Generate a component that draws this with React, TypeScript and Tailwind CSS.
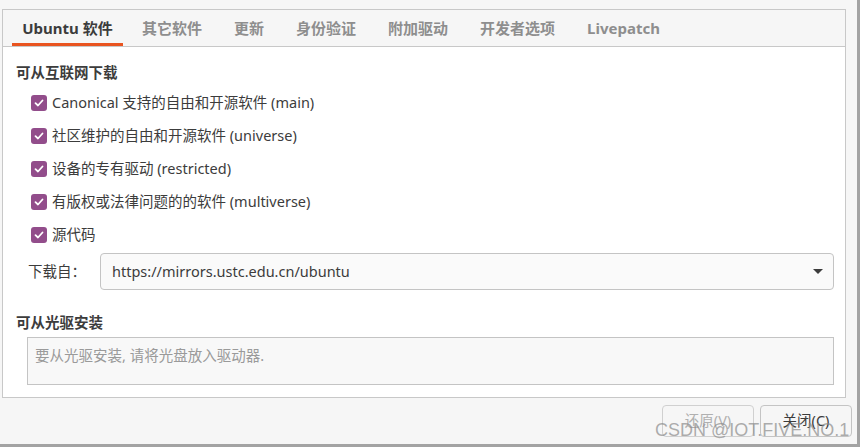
const tabs = ['Ubuntu 软件', '其它软件', '更新', '身份验证', '附加驱动', '开发者选项', 'Livepatch']

const sources = [
    'Canonical 支持的自由和开源软件 (main)',
    '社区维护的自由和开源软件 (universe)',
    '设备的专有驱动 (restricted)',
    '有版权或法律问题的的软件 (multiverse)',
    '源代码',
]

const CheckBox = () => (
    <span className="w-4 h-4 rounded-[3px] bg-[#924d8b] flex items-center justify-center shrink-0">
        <svg width="12" height="12" viewBox="0 0 12 12" fill="none">
            <path d="M2.5 6.2 L5 8.5 L9.5 3.5" stroke="#fff" strokeWidth="1.8" strokeLinecap="round" strokeLinejoin="round" />
        </svg>
    </span>
)

export default function App() {
    return (
        <div
            className="relative w-[860px] h-[447px] bg-[#f6f6f6] border-r-[3px] border-b-[3px] border-[#a3a3a3] text-[14.5px] text-[#3c3c3c] overflow-hidden"
            style={{ fontFamily: '"Noto Sans", "Noto Sans CJK SC", sans-serif' }}
        >
            <div className="ml-[2px] mt-[9px] w-[844px] h-[389px] border border-[#c8c8c8] flex flex-col">
                <div className="h-[37px] border-b border-[#c8c8c8] flex items-stretch pl-[9px] text-[15px]">
                    {tabs.map((t, i) => (
                        <div
                            key={t}
                            className={
                                i === 0
                                    ? 'w-[111px] mr-[3px] flex items-center justify-center font-bold text-[#3c3c3c] border-b-[3px] border-[#e95420] pt-[3px]'
                                    : 'px-[16px] flex items-center font-bold text-[#8e8e8e] border-b-[3px] border-transparent pt-[3px]'
                            }
                        >
                            {t}
                        </div>
                    ))}
                </div>
                <div className="flex-1 bg-white pl-[13px] pr-[11px] pt-[16px]">
                    <div className="h-[18px] leading-[18px] font-bold">可从互联网下载</div>
                    <div className="pl-[15px] mt-[5px]">
                        {sources.map((s) => (
                            <div key={s} className="h-[33px] flex items-center gap-[5px]">
                                <CheckBox />
                                <span>{s}</span>
                            </div>
                        ))}
                    </div>
                    <div className="mt-[2px] pl-[12px] flex items-center">
                        <span className="w-[72px]">下载自：</span>
                        <div className="flex-1 h-[37px] rounded-[4px] border border-[#c4c4c4] bg-[#fafafa] flex items-center justify-between pl-[11px] pr-[10px]">
                            <span>https://mirrors.ustc.edu.cn/ubuntu</span>
                            <svg width="10" height="6" viewBox="0 0 10 6">
                                <path d="M0 0 L10 0 L5 5 Z" fill="#3c3c3c" />
                            </svg>
                        </div>
                    </div>
                    <div className="mt-[23px] h-[18px] leading-[18px] font-bold">可从光驱安装</div>
                    <div className="mt-[6px] ml-[11px] h-[48px] border border-[#c4c4c4] bg-[#f8f8f8] pl-[7px] pt-[7px] text-[#9a9a9a]">
                        要从光驱安装, 请将光盘放入驱动器.
                    </div>
                </div>
            </div>
            <div className="flex justify-end gap-[6px] pr-[5px] mt-[7px]">
                <button className="w-[92px] h-[32px] rounded-[4px] border border-[#d0d0d0] bg-[#f6f6f6] text-[#b0b0b0]">
                    还原(V)
                </button>
                <button className="w-[92px] h-[32px] rounded-[4px] border border-[#c4c4c4] bg-[#f6f6f6] text-[#3c3c3c]">
                    关闭(C)
                </button>
            </div>
            <div
                className="absolute left-[655px] top-[419px] whitespace-nowrap text-[18px] leading-[22px] text-[#8a8a8a]/70 pointer-events-none"
                style={{ fontFamily: '"Liberation Sans", sans-serif' }}
            >
                CSDN @IOT.FIVE.NO.1
            </div>
        </div>
    )
}
